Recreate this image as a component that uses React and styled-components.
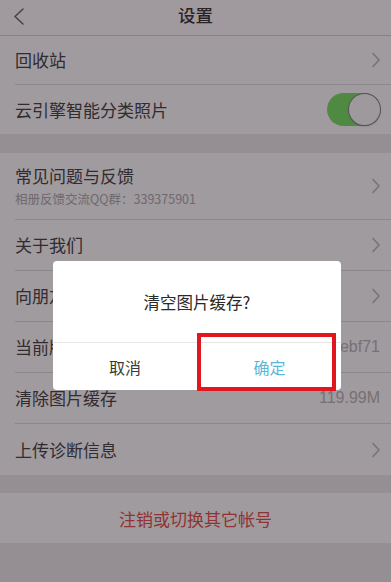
import React from 'react'
import styled, { createGlobalStyle } from 'styled-components'

const GlobalStyle = createGlobalStyle`
  html, body {
    margin: 0;
    padding: 0;
    background: #ebeaec;
  }
  body {
    font-family: "Noto Sans CJK SC", "Noto Sans", "Liberation Sans", sans-serif;
    color: #333;
  }
`

const Page = styled.div`
  width: 391px;
  height: 582px;
  overflow: hidden;
  background: #ebeaec;
`

const NavBar = styled.div`
  height: 35px;
  background: #fdfcfd;
  border-bottom: 1px solid #d4d3d5;
  display: flex;
  align-items: center;
  justify-content: center;
  position: relative;
`

const NavTitle = styled.div`
  font-size: 17.5px;
  font-weight: 500;
  color: #383638;
  margin-top: -6px;
`

const BackButton = styled.svg`
  position: absolute;
  left: 13px;
  top: 8px;
`

const Group = styled.div`
  background: #fefdfe;
  margin-bottom: ${(p) => p.$gap || 0}px;
`

const Row = styled.div`
  height: ${(p) => p.$h || 50}px;
  display: flex;
  align-items: center;
  justify-content: space-between;
  padding: 0 10px 0 15px;
  position: relative;
  &:not(:last-child)::after {
    content: '';
    position: absolute;
    left: 15px;
    right: 0;
    bottom: -1px;
    height: 1px;
    background: #dddcde;
  }
  & + & {
    margin-top: 1px;
  }
`

const Label = styled.div`
  display: flex;
  flex-direction: column;
`

const Title = styled.span`
  font-size: 17px;
  color: #464446;
  line-height: 24px;
`

const Sub = styled.span`
  font-size: 12.5px;
  color: #adabad;
  line-height: 18px;
  margin-top: 2px;
`

const Value = styled.span`
  font-size: 16px;
  color: #b9b7b9;
  font-family: "Liberation Sans", "Noto Sans", sans-serif;
  margin-right: 1px;
`

const Chevron = () => (
  <svg width="10" height="16" viewBox="0 0 10 16">
    <polyline
      points="2,1.5 8,8 2,14.5"
      fill="none"
      stroke="#bdbcbf"
      strokeWidth="1.7"
      strokeLinecap="round"
      strokeLinejoin="round"
    />
  </svg>
)

const Switch = styled.div`
  width: 54px;
  height: 33px;
  border-radius: 17px;
  background: #77e065;
  display: flex;
  align-items: center;
  justify-content: flex-end;
  padding: 1px;
  box-sizing: border-box;
`

const Knob = styled.div`
  width: 31px;
  height: 31px;
  border-radius: 50%;
  background: #fbfafb;
  box-shadow: 0 0 0 1px #878788, 0 1px 2px rgba(0, 0, 0, 0.3);
`

const Logout = styled.div`
  height: 50px;
  background: #fefdfe;
  display: flex;
  align-items: center;
  justify-content: center;
  font-size: 17px;
  color: #e4514a;
`

const Dim = styled.div`
  position: fixed;
  inset: 0;
  background: rgba(20, 8, 14, 0.4);
`

const Dialog = styled.div`
  position: fixed;
  left: 53px;
  top: 261px;
  width: 288px;
  height: 129px;
  background: #fff;
  border-radius: 4px;
  display: flex;
  flex-direction: column;
`

const DialogTitle = styled.div`
  height: 81px;
  display: flex;
  align-items: center;
  justify-content: center;
  font-size: 16.5px;
  color: #2a2a2a;
  border-bottom: 1px solid #e6e6e6;
`

const Buttons = styled.div`
  flex: 1;
  display: grid;
  grid-template-columns: 1fr 1fr;
`

const DialogButton = styled.div`
  display: flex;
  align-items: center;
  justify-content: center;
  font-size: 16px;
  color: ${(p) => (p.$primary ? '#5ab8d8' : '#3a3a3a')};
  & + & {
    border-left: 1px solid #e6e6e6;
  }
`

const Highlight = styled.div`
  position: fixed;
  left: 197px;
  top: 333px;
  width: 139px;
  height: 58px;
  border: 4px solid #e2161f;
  box-sizing: border-box;
`

export default function App() {
  return (
    <Page>
      <GlobalStyle />
      <NavBar>
        <BackButton width="12" height="17" viewBox="0 0 12 17">
          <polyline
            points="10,1 2,8.5 10,16"
            fill="none"
            stroke="#666"
            strokeWidth="1.5"
            strokeLinecap="round"
            strokeLinejoin="round"
          />
        </BackButton>
        <NavTitle>设置</NavTitle>
      </NavBar>

      <Group $gap={19}>
        <Row $h={48}>
          <Title>回收站</Title>
          <Chevron />
        </Row>
        <Row $h={49}>
          <Title>云引擎智能分类照片</Title>
          <Switch>
            <Knob />
          </Switch>
        </Row>
      </Group>

      <Group $gap={18}>
        <Row $h={66}>
          <Label>
            <Title>常见问题与反馈</Title>
            <Sub>相册反馈交流QQ群：339375901</Sub>
          </Label>
          <Chevron />
        </Row>
        <Row>
          <Title>关于我们</Title>
          <Chevron />
        </Row>
        <Row>
          <Title>向朋友推荐</Title>
          <Chevron />
        </Row>
        <Row>
          <Title>当前版本</Title>
          <Value>5.2.0-ebf71</Value>
        </Row>
        <Row>
          <Title>清除图片缓存</Title>
          <Value>119.99M</Value>
        </Row>
        <Row $h={51}>
          <Title>上传诊断信息</Title>
          <Chevron />
        </Row>
      </Group>

      <Logout>注销或切换其它帐号</Logout>

      <Dim />
      <Dialog>
        <DialogTitle>清空图片缓存?</DialogTitle>
        <Buttons>
          <DialogButton>取消</DialogButton>
          <DialogButton $primary>确定</DialogButton>
        </Buttons>
      </Dialog>
      <Highlight />
    </Page>
  )
}
